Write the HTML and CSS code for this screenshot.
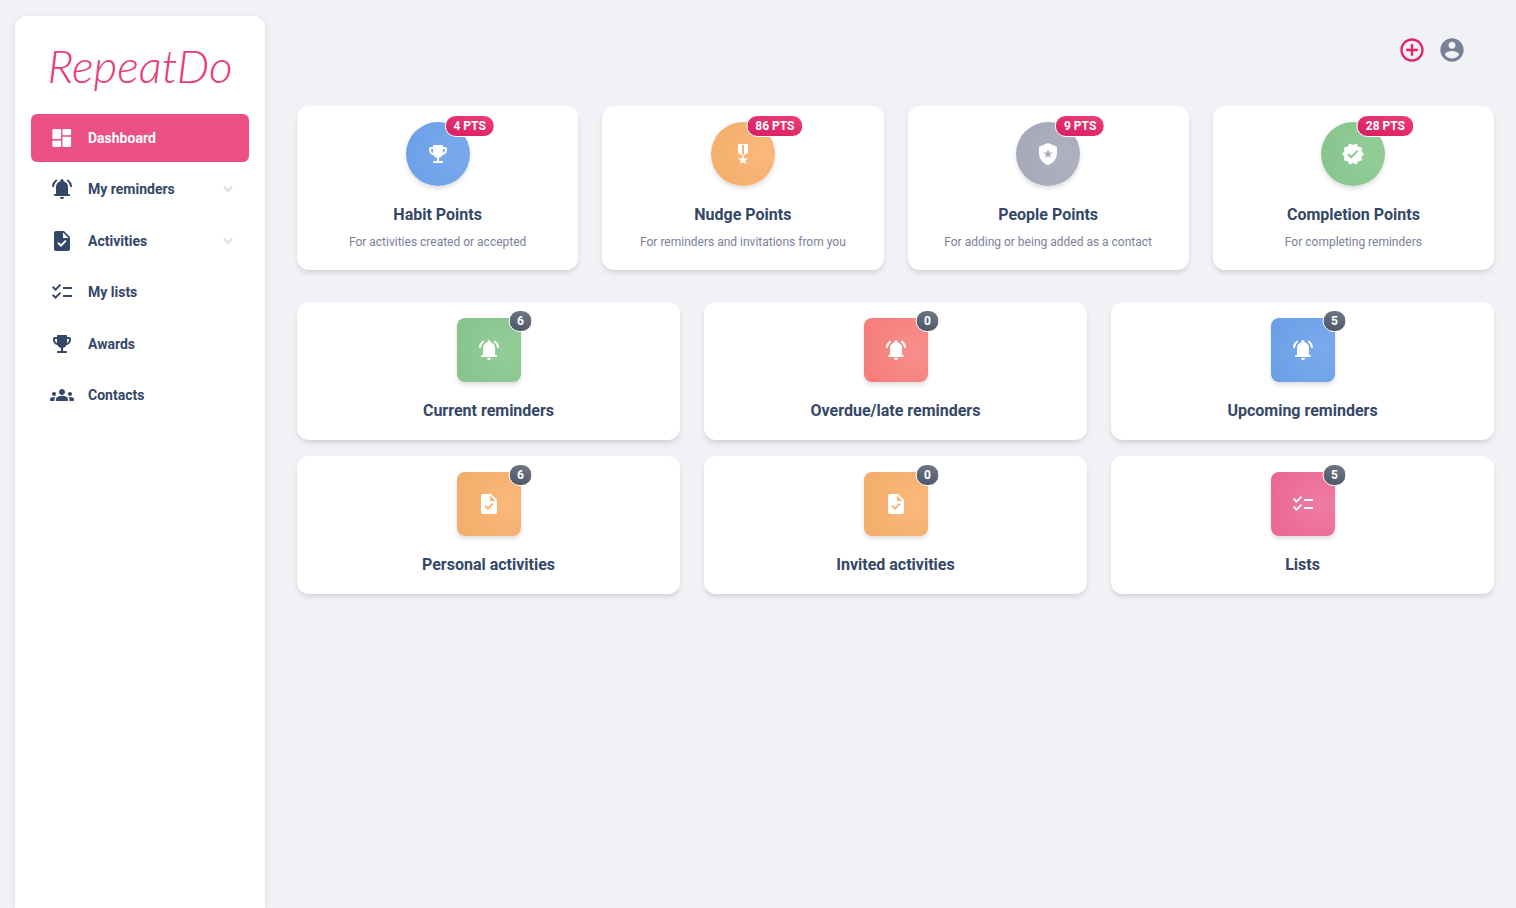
FILE: index.html
```html
<!DOCTYPE html>
<html lang="en">
<head>
  <meta charset="UTF-8">
  <meta name="viewport" content="width=device-width, initial-scale=1.0">
  <title>RepeatDo - Dashboard</title>
  <link rel="stylesheet" href="styles.css">
</head>
<body>
  <!-- icons shared by the menu and the cards -->
  <svg class="sprite" aria-hidden="true">
    <symbol id="dashboard" viewBox="0 0 24 24"><rect x="2.4" y="3" width="8.7" height="9.9" rx="1"/><rect x="2.4" y="14.6" width="8.7" height="6.4" rx="1"/><rect x="12.4" y="3" width="8.7" height="6.2" rx="1"/><rect x="12.4" y="10.8" width="8.7" height="10.2" rx="1"/></symbol>
    <symbol id="bell" viewBox="0 0 24 24"><path d="M5 19q-.43 0-.71-.29T4 18t.29-.71T5 17h1v-7q0-2.08 1.25-3.69T10.5 4.2v-.7q0-.63.44-1.06T12 2t1.06.44.44 1.06v.7q2 .5 3.25 2.11T18 10v7h1q.43 0 .71.29T20 18t-.29.71T19 19zm7 3q-.83 0-1.41-.59T10 20h4q0 .83-.59 1.41T12 22z"/><path d="M3 9.2c.2-2.3 1.3-4.2 3.2-5.6M21 9.2c-.2-2.3-1.3-4.2-3.2-5.6" fill="none" stroke="currentColor" stroke-width="1.9" stroke-linecap="round"/></symbol>
    <symbol id="task" viewBox="0 0 24 24"><path d="M14 2H6c-1.1 0-2 .9-2 2v16c0 1.1.9 2 2 2h12c1.1 0 2-.9 2-2V8l-6-6zm-3.06 16L7.4 14.46l1.41-1.41 2.12 2.12 4.24-4.24 1.41 1.41L10.94 18zM13 9V3.5L18.5 9H13z"/></symbol>
    <symbol id="checklist" viewBox="0 0 24 24"><path d="M22 7h-9v2h9V7zm0 8h-9v2h9v-2zM5.54 11 2 7.46l1.41-1.41 2.12 2.12 4.24-4.24 1.41 1.41L5.54 11zm0 8L2 15.46l1.41-1.41 2.12 2.12 4.24-4.24 1.41 1.41L5.54 19z"/></symbol>
    <symbol id="trophy" viewBox="0 0 24 24"><path d="M19 5h-2V4c0-.55-.45-1-1-1H8c-.55 0-1 .45-1 1v1H5c-1.1 0-2 .9-2 2v1c0 2.55 1.92 4.63 4.39 4.94.63 1.5 1.98 2.63 3.61 2.96V19H8c-.55 0-1 .45-1 1s.45 1 1 1h8c.55 0 1-.45 1-1s-.45-1-1-1h-3v-3.1c1.63-.33 2.98-1.46 3.61-2.96C19.08 12.63 21 10.55 21 8V7c0-1.1-.9-2-2-2zM5 8V7h2v3.82C5.84 10.4 5 9.3 5 8zm14 0c0 1.3-.84 2.4-2 2.82V7h2v1z"/></symbol>
    <symbol id="groups" viewBox="0 0 24 24"><path d="M12 12.75c1.63 0 3.07.39 4.24.9 1.08.48 1.76 1.56 1.76 2.73V17c0 .55-.45 1-1 1H7c-.55 0-1-.45-1-1v-.61c0-1.18.68-2.26 1.76-2.73 1.17-.52 2.61-.91 4.24-.91zM4 13c1.1 0 2-.9 2-2s-.9-2-2-2-2 .9-2 2 .9 2 2 2zm1.13 1.1c-.37-.06-.74-.1-1.13-.1-.99 0-1.93.21-2.78.58A2.01 2.01 0 0 0 0 16.43V17c0 .55.45 1 1 1h3.5v-1.61c0-.83.23-1.61.63-2.29zM20 13c1.1 0 2-.9 2-2s-.9-2-2-2-2 .9-2 2 .9 2 2 2zm4 3.43c0-.81-.48-1.53-1.22-1.85-.85-.37-1.79-.58-2.78-.58-.39 0-.76.04-1.13.1.4.68.63 1.46.63 2.29V18H23c.55 0 1-.45 1-1v-.57zM12 6c1.66 0 3 1.34 3 3s-1.34 3-3 3-3-1.34-3-3 1.34-3 3-3z"/></symbol>
    <symbol id="medal" viewBox="0 0 24 24"><path d="M17 10.43V3c0-.55-.45-1-1-1H8c-.55 0-1 .45-1 1v7.43c0 .35.18.68.49.86l4.18 2.51-.99 2.34-3.41.29 2.59 2.24L9.07 22 12 20.23 14.93 22l-.78-3.33 2.59-2.24-3.41-.29-.99-2.34 4.18-2.51c.3-.18.48-.5.48-.86zm-4 1.8-1 .6-1-.6V3h2v9.23z"/></symbol>
    <symbol id="shield" viewBox="0 0 24 24"><path fill-rule="evenodd" d="M11.19 1.36l-7 2.9C3.47 4.57 3 5.3 3 6.1V11c0 5.55 3.84 10.74 9 12 5.16-1.26 9-6.45 9-12V6.1c0-.8-.47-1.53-1.19-1.84l-7-2.9c-.51-.22-1.11-.22-1.62 0zM14.9 16.2 12 14l-2.9 2.2 1.1-3.5-2.8-2.1h3.5L12 7l1.1 3.6h3.5l-2.8 2.1z"/></symbol>
    <symbol id="verified" viewBox="0 0 24 24"><path d="M23 12l-2.44-2.79.34-3.69-3.61-.82-1.89-3.2L12 2.96 8.6 1.5 6.71 4.69 3.1 5.5l.34 3.7L1 12l2.44 2.79-.34 3.7 3.61.82L8.6 22.5l3.4-1.47 3.4 1.46 1.89-3.19 3.61-.82-.34-3.69L23 12zm-12.91 4.72-3.8-3.81 1.48-1.48 2.32 2.33 5.85-5.87 1.48 1.48-7.33 7.35z"/></symbol>
    <symbol id="chevron" viewBox="0 0 10 10"><path d="M1.5 3 5 6.5 8.5 3" fill="none" stroke="currentColor" stroke-width="2"/></symbol>
    <symbol id="add" viewBox="0 0 24 24"><path d="M13 7h-2v4H7v2h4v4h2v-4h4v-2h-4V7zm-1-5C6.49 2 2 6.49 2 12s4.49 10 10 10 10-4.49 10-10S17.51 2 12 2zm0 18c-4.41 0-8-3.59-8-8s3.59-8 8-8 8 3.59 8 8-3.59 8-8 8z"/></symbol>
    <symbol id="account" viewBox="0 0 24 24"><path d="M12 2C6.48 2 2 6.48 2 12s4.48 10 10 10 10-4.48 10-10S17.52 2 12 2zm0 3c1.66 0 3 1.34 3 3s-1.34 3-3 3-3-1.34-3-3 1.34-3 3-3zm0 14.2c-2.5 0-4.71-1.28-6-3.22.03-1.99 4-3.08 6-3.08 1.99 0 5.97 1.09 6 3.08-1.29 1.94-3.5 3.22-6 3.22z"/></symbol>
  </svg>

  <div class="layout">
    <aside class="sidebar">
      <a class="logo" href="#">RepeatDo</a>
      <nav class="menu">
        <a class="menu-item active" href="#"><svg class="icon"><use href="#dashboard"/></svg><span>Dashboard</span></a>
        <button class="menu-item" type="button"><svg class="icon"><use href="#bell"/></svg><span>My reminders</span><svg class="chevron"><use href="#chevron"/></svg></button>
        <button class="menu-item" type="button"><svg class="icon"><use href="#task"/></svg><span>Activities</span><svg class="chevron"><use href="#chevron"/></svg></button>
        <a class="menu-item" href="#"><svg class="icon"><use href="#checklist"/></svg><span>My lists</span></a>
        <a class="menu-item" href="#"><svg class="icon"><use href="#trophy"/></svg><span>Awards</span></a>
        <a class="menu-item" href="#"><svg class="icon"><use href="#groups"/></svg><span>Contacts</span></a>
      </nav>
    </aside>

    <main class="content">
      <header class="toolbar">
        <button class="tool add" type="button" aria-label="Add"><svg><use href="#add"/></svg></button>
        <button class="tool account" type="button" aria-label="Account"><svg><use href="#account"/></svg></button>
      </header>

      <section class="cards points">
        <article class="card">
          <div class="tile round blue"><svg class="icon"><use href="#trophy"/></svg><span class="badge">4 PTS</span></div>
          <h2>Habit Points</h2>
          <p>For activities created or accepted</p>
        </article>
        <article class="card">
          <div class="tile round orange"><svg class="icon"><use href="#medal"/></svg><span class="badge">86 PTS</span></div>
          <h2>Nudge Points</h2>
          <p>For reminders and invitations from you</p>
        </article>
        <article class="card">
          <div class="tile round grey"><svg class="icon"><use href="#shield"/></svg><span class="badge">9 PTS</span></div>
          <h2>People Points</h2>
          <p>For adding or being added as a contact</p>
        </article>
        <article class="card">
          <div class="tile round green"><svg class="icon"><use href="#verified"/></svg><span class="badge">28 PTS</span></div>
          <h2>Completion Points</h2>
          <p>For completing reminders</p>
        </article>
      </section>

      <section class="cards totals">
        <a class="card" href="#">
          <div class="tile green"><svg class="icon"><use href="#bell"/></svg><span class="badge">6</span></div>
          <h2>Current reminders</h2>
        </a>
        <a class="card" href="#">
          <div class="tile red"><svg class="icon"><use href="#bell"/></svg><span class="badge">0</span></div>
          <h2>Overdue/late reminders</h2>
        </a>
        <a class="card" href="#">
          <div class="tile blue"><svg class="icon"><use href="#bell"/></svg><span class="badge">5</span></div>
          <h2>Upcoming reminders</h2>
        </a>
        <a class="card" href="#">
          <div class="tile orange"><svg class="icon"><use href="#task"/></svg><span class="badge">6</span></div>
          <h2>Personal activities</h2>
        </a>
        <a class="card" href="#">
          <div class="tile orange"><svg class="icon"><use href="#task"/></svg><span class="badge">0</span></div>
          <h2>Invited activities</h2>
        </a>
        <a class="card" href="#">
          <div class="tile pink"><svg class="icon"><use href="#checklist"/></svg><span class="badge">5</span></div>
          <h2>Lists</h2>
        </a>
      </section>
    </main>
  </div>
</body>
</html>
```

FILE: styles.css
```css
* {
  box-sizing: border-box;
}

body {
  margin: 0;
  background-color: #f0f2f5;
  color: #344767;
  font-family: Roboto, sans-serif;
  font-size: 14px;
}

a {
  color: inherit;
  text-decoration: none;
}

button {
  border: 0;
  background: none;
  color: inherit;
  font: inherit;
  cursor: pointer;
}

svg {
  display: block;
  fill: currentColor;
}

.sprite {
  display: none;
}

.icon {
  width: 24px;
  height: 24px;
}

.layout {
  display: flex;
  gap: 32px;
  padding: 16px 22px 0 15px;
}

/* sidebar */
.sidebar {
  flex: 0 0 250px;
  min-height: calc(100vh - 16px);
  padding: 16px;
  background-color: #fff;
  border-radius: 12px 12px 0 0;
  box-shadow: 0 2px 6px rgba(0, 0, 0, 0.1);
}

.logo {
  display: block;
  height: 82px;
  color: #e93c77;
  font-family: Lato, sans-serif;
  font-size: 46px;
  font-style: italic;
  font-weight: 300;
  line-height: 68px;
  text-align: center;
}

.menu {
  display: flex;
  flex-direction: column;
  justify-content: space-between;
  height: 305px;
}

.menu-item {
  display: flex;
  align-items: center;
  gap: 14px;
  width: 100%;
  min-height: 48px;
  padding: 0 15px 0 19px;
  border-radius: 6px;
  font-weight: 700;
  line-height: 22px;
  text-align: left;
}

.menu-item span {
  flex: 1;
}

.menu-item.active {
  background-color: #eb5083;
  color: #fff;
}

.chevron {
  width: 12px;
  height: 12px;
  color: #dee2e8;
}

/* main column */
.content {
  flex: 1;
  min-width: 0;
}

.toolbar {
  display: flex;
  justify-content: flex-end;
  gap: 12px;
  height: 90px;
  padding: 20px 28px 0 0;
}

.tool {
  width: 28px;
  height: 28px;
  padding: 0;
}

.tool svg {
  width: 28px;
  height: 28px;
}

.add {
  color: #e91e63;
}

.account {
  color: #7b809a;
}

.cards {
  display: grid;
  column-gap: 24px;
  row-gap: 16px;
}

.points {
  grid-template-columns: repeat(4, 1fr);
  margin-bottom: 32px;
}

.totals {
  grid-template-columns: repeat(3, 1fr);
}

.card {
  padding: 16px;
  background-color: #fff;
  border-radius: 12px;
  box-shadow: 0 4px 6px -1px rgba(0, 0, 0, 0.1), 0 2px 4px -1px rgba(0, 0, 0, 0.06);
  text-align: center;
}

.card h2 {
  margin: 16px 0 0 0;
  font-size: 16px;
  font-weight: 700;
  line-height: 26px;
}

.card p {
  margin: 2px 0 0 0;
  color: #7b809a;
  font-size: 12px;
  line-height: 24px;
}

.tile {
  position: relative;
  display: flex;
  align-items: center;
  justify-content: center;
  width: 64px;
  height: 64px;
  margin: 0 auto;
  border-radius: 8px;
  box-shadow: 0 3px 4px rgba(0, 0, 0, 0.12);
  color: #fff;
}

.tile.round {
  border-radius: 50%;
}

.blue {
  background: radial-gradient(circle at 80% 50%, #7aaaee, #6a9ee5);
}

.orange {
  background: radial-gradient(circle at 80% 50%, #fab87a, #f3ac6b);
}

.grey {
  background: radial-gradient(circle at 80% 50%, #aeb1c1, #a3a7b8);
}

.green {
  background: radial-gradient(circle at 80% 50%, #93ce98, #86c28b);
}

.red {
  background: radial-gradient(circle at 80% 50%, #f78f8c, #f57b78);
}

.pink {
  background: radial-gradient(circle at 80% 50%, #f07ba3, #e96691);
}

.badge {
  position: absolute;
  top: -8px;
  left: 100%;
  padding: 0 8px;
  border: 1px solid #fff;
  border-radius: 11px;
  background: linear-gradient(195deg, #747b8a, #495361) border-box;
  font-size: 12px;
  font-weight: 700;
  line-height: 20px;
  white-space: nowrap;
  transform: translateX(-50%);
}

.round .badge {
  top: -7px;
  background: linear-gradient(195deg, #ec407a, #d81b60) border-box;
}
```
